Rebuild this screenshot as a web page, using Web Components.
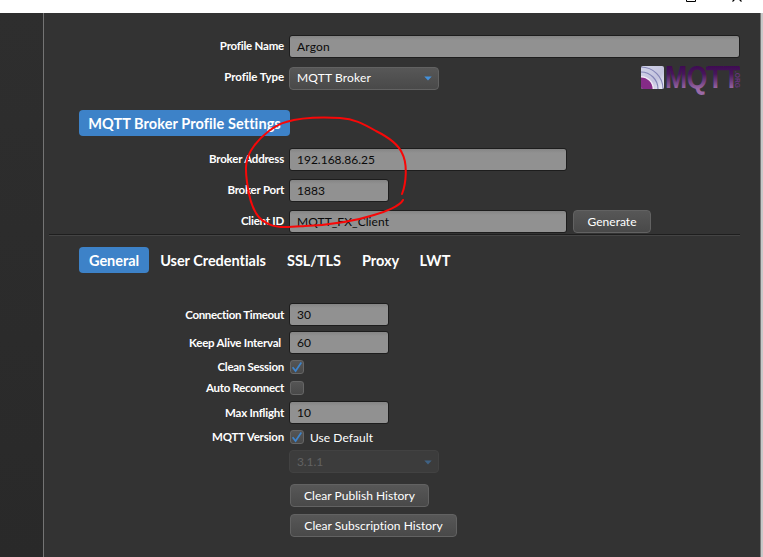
<!DOCTYPE html>
<html lang="en">
<head>
<meta charset="utf-8">
<title>Broker Profile</title>
<style>
html,body{margin:0;height:100%;overflow:hidden;background:#333}
body{font-family:Lato,"Open Sans",sans-serif;font-size:12px;color:#fff}
</style>
</head>
<body>
<fx-window>
  <fx-row label="Profile Name" fit="64" lift="2" style="margin-top:22px"><fx-input value="Argon" fit="33" style="width:451px"></fx-input></fx-row>
  <fx-row label="Profile Type" fit="59.5" lift="3" style="margin-top:8px"><fx-select value="MQTT Broker" fit="74" style="padding-bottom:2px"></fx-select><fx-logo></fx-logo></fx-row>
  <fx-tab active label="MQTT Broker Profile Settings" fit="192" style="margin:21px 0 0 35px;width:211px"></fx-tab>
  <fx-row label="Broker Address" fit="75" lift="2" style="margin-top:12px"><fx-input value="192.168.86.25" fit="78" style="width:278px"></fx-input></fx-row>
  <fx-row label="Broker Port" fit="56.5" lift="2" style="margin-top:8px"><fx-input value="1883" fit="28" style="width:100px"></fx-input></fx-row>
  <fx-row label="Client ID" fit="43" lift="2" style="margin-top:8px"><fx-input value="MQTT_FX_Client" fit="92" style="width:278px"></fx-input><fx-button label="Generate" fit="49" style="width:78px;margin-left:6px"></fx-button></fx-row>
  <fx-rule></fx-rule>
  <fx-tabs>
    <fx-tab active label="General" fit="50" style="width:70px"></fx-tab>
    <fx-tab label="User Credentials" fit="106" style="width:128px"></fx-tab>
    <fx-tab label="SSL/TLS" fit="54" style="width:74px"></fx-tab>
    <fx-tab label="Proxy" fit="37" style="width:59px"></fx-tab>
    <fx-tab label="LWT" fit="31" style="width:50px"></fx-tab>
  </fx-tabs>
  <fx-row label="Connection Timeout" fit="99" style="margin-top:30px"><fx-input value="30" fit="14" style="width:100px"></fx-input></fx-row>
  <fx-row label="Keep Alive Interval" fit="92" inset="3" style="margin-top:5px"><fx-input value="60" fit="14" style="width:100px"></fx-input></fx-row>
  <fx-row label="Clean Session" fit="66.5" style="margin-top:6px;height:14px"><fx-check checked></fx-check></fx-row>
  <fx-row label="Auto Reconnect" fit="78" style="margin-top:7px;height:14px"><fx-check></fx-check></fx-row>
  <fx-row label="Max Inflight" fit="59" style="margin-top:6px"><fx-input value="10" fit="14" style="width:100px"></fx-input></fx-row>
  <fx-row label="MQTT Version" fit="72" style="margin-top:6px;height:14px"><fx-check checked label="Use Default" fit="63"></fx-check></fx-row>
  <fx-row style="margin-top:6px"><fx-select disabled value="3.1.1" fit="26"></fx-select></fx-row>
  <fx-row style="margin-top:11px"><fx-button label="Clear Publish History" fit="111" style="width:139px;margin-left:1px"></fx-button></fx-row>
  <fx-row style="margin-top:7px"><fx-button label="Clear Subscription History" fit="138.5" style="width:167px;margin-left:1px"></fx-button></fx-row>
</fx-window>
<script>
class FxElement extends HTMLElement{
  connectedCallback(){
    if(this.shadowRoot)return;
    this.attachShadow({mode:'open'}).innerHTML=this.render();
    this.space();
  }
  a(n){return this.getAttribute(n)||''}
  text(){return this.a('label')||this.a('value')}
  /* Tracks the caption so that it takes the width given by "fit". */
  space(){
    const t=this.shadowRoot.querySelector('.t'),w=parseFloat(this.a('fit'));
    if(!t||!w)return;
    const n=this.text().length,s=(w-t.getBoundingClientRect().width)/n;
    t.style.letterSpacing=s.toFixed(3)+'px';
  }
}
const def=(n,render)=>customElements.define(n,class extends FxElement{render(){return render(this)}});

def('fx-window',()=>`<style>
:host{display:grid;grid-template-rows:13px 1fr;width:763px;height:557px;overflow:hidden}
.bar{background:#fff;display:flex;justify-content:flex-end;height:13px;overflow:hidden}
.bar svg{display:block}
.body{display:grid;grid-template-columns:44px 716px 1fr;min-height:0}
.side{background:linear-gradient(#2e2e2e,#292929);border-right:1px solid #747474}
.main{background:#333;overflow:hidden}
.edge{background:#c8c8c8;border-left:1px solid #777}
</style>
<div class="bar"><svg width="90" height="13" viewBox="0 0 90 13"><path d="M13.5 0V1.5H22.5V0" fill="none" stroke="#000"/><path d="M59.5 1.5L62 -1M68.5 1.5L66 -1" fill="none" stroke="#000" stroke-width="1.2"/></svg></div>
<div class="body"><div class="side"></div><div class="main"><slot></slot></div><div class="edge"></div></div>`);

def('fx-row',e=>`<style>
:host{display:grid;grid-template-columns:240px 1fr;column-gap:5px;height:23px;align-items:center}
.l{text-align:right;font-size:11.5px;font-weight:700;line-height:14px;white-space:nowrap;padding-right:${e.a('inset')||0}px;padding-bottom:${e.a('lift')||0}px}
.f{display:flex;align-items:center;height:100%}
</style><div class="l"><span class="t">${e.a('label')}</span></div><div class="f"><slot></slot></div>`);

def('fx-input',e=>`<style>
:host{display:flex;align-items:center;box-sizing:border-box;height:23px;border:1px solid #1d1d1d;border-radius:3px;background:linear-gradient(#858585,#919191 4px);color:#0a0a0a;padding:1px 0 0 7px;line-height:16px;white-space:nowrap}
</style><span class="t">${e.a('value')}</span>`);

def('fx-select',e=>`<style>
:host{display:flex;align-items:center;justify-content:space-between;box-sizing:border-box;width:150px;height:23px;border:1px solid #626262;border-radius:4px;background:linear-gradient(#575757,#494949);padding:1px 6px 0 7px;line-height:16px;white-space:nowrap}
:host([disabled]){background:#3c3c3c;border-color:#424242;color:#626262}
:host([disabled]) svg{opacity:.45}
</style><span class="t">${e.a('value')}</span><svg width="8" height="5" viewBox="0 0 8 5"><path d="M.3 .5H7.7L4 4.5Z" fill="#4391dc"/></svg>`);

def('fx-button',e=>`<style>
:host{display:flex;align-items:center;justify-content:center;box-sizing:border-box;height:23px;border:1px solid #626262;border-radius:4px;background:linear-gradient(#575757,#494949);padding-top:1px;line-height:16px;white-space:nowrap}
</style><span class="t">${e.a('label')}</span>`);

def('fx-check',e=>`<style>
:host{display:flex;align-items:center;height:14px;margin-left:1px;white-space:nowrap;line-height:16px}
.b{box-sizing:border-box;width:14px;height:14px;border:1px solid #666;border-radius:3px;background:linear-gradient(#555,#494949);margin-right:6px}
svg{display:block}.t{padding-top:1px}
</style><span class="b">${e.hasAttribute('checked')?'<svg width="12" height="12" viewBox="0 0 12 12"><path d="M1.6 6.3L4.6 10L10.3 1.6" fill="none" stroke="#3d84cc" stroke-width="1.7"/></svg>':''}</span><span class="t">${e.a('label')}</span>`);

def('fx-tab',e=>`<style>
:host{display:flex;align-items:center;justify-content:center;box-sizing:border-box;height:26px;border-radius:4px;font-size:14.5px;font-weight:700;line-height:18px;white-space:nowrap;padding:2px 0 0}
:host([active]){background:#3d82c8}
</style><span class="t">${e.a('label')}</span>`);

def('fx-tabs',()=>`<style>:host{display:flex;margin:11px 0 0 35px}</style><slot></slot>`);
def('fx-rule',()=>`<style>:host{display:block;height:1px;margin:1px 0 0 5px;width:691px;background:#1e1e1e;border-bottom:1px solid #444}</style>`);

def('fx-logo',()=>`<style>:host{display:block;margin-left:201px;width:102px;height:25px}svg{display:block;overflow:visible}
text{font-family:"Liberation Sans",Arial,sans-serif;font-weight:700}</style>
<svg width="102" height="25" viewBox="0 0 102 25">
<defs><linearGradient id="p" gradientUnits="userSpaceOnUse" x1="0" y1="0" x2="0" y2="23"><stop offset="0" stop-color="#3e0b52"/><stop offset=".35" stop-color="#48165c"/><stop offset="1" stop-color="#9a6aa6"/></linearGradient>
<linearGradient id="m" gradientUnits="userSpaceOnUse" x1="0" y1="-22" x2="0" y2="1"><stop offset="0" stop-color="#3e0b52"/><stop offset=".35" stop-color="#48165c"/><stop offset="1" stop-color="#9a6aa6"/></linearGradient>
<linearGradient id="q" x1="0" y1="0" x2="1" y2="1"><stop offset="0" stop-color="#d2d4e8"/><stop offset=".6" stop-color="#c3c3de"/><stop offset="1" stop-color="#eeeef7"/></linearGradient>
<clipPath id="c"><rect x="1" y="0" width="23" height="23" rx="2"/></clipPath></defs>
<g clip-path="url(#c)"><rect x="1" y="0" width="23" height="23" fill="url(#q)"/>
<g fill="none" stroke="#8485b7" stroke-width="1.2"><circle cx="1" cy="23" r="17"/><circle cx="1" cy="23" r="22"/></g>
<circle cx="1" cy="23" r="12.3" fill="#852b86" stroke="#f0e8f5" stroke-width="1.5"/></g>
<text transform="translate(25 22) scale(.86 1)" font-size="31" letter-spacing="-.4" fill="url(#m)">MQTT</text>
<path d="M66 .7H100V4.2H66Z" fill="url(#p)"/>
<text transform="translate(94.8 5) rotate(90)" font-size="6.5" fill="#6a3480" textLength="17" lengthAdjust="spacingAndGlyphs">.ORG</text>
</svg>`);

customElements.define('fx-annotation',class extends HTMLElement{
  connectedCallback(){this.attachShadow({mode:'open'}).innerHTML=`<style>:host{position:absolute;left:0;top:0;pointer-events:none}svg{display:block}</style>
<svg width="763" height="557" viewBox="0 0 763 557"><path d="M402 194C406 184 408 164 402 153C398 144 386 136 376 131C362 123 354 119 340 118C322 117 299 118 286 122C275 125 262 135 254 146C245 158 245 168 247 182C249 198 253 216 265 222C275 229 290 227 305 226C329 225 352 222 374 215C385 212 400 206 403 200" fill="none" stroke="#f80808" stroke-width="2" stroke-linecap="round"/></svg>`}
});
document.body.append(document.createElement('fx-annotation'));
</script>
</body>
</html>
